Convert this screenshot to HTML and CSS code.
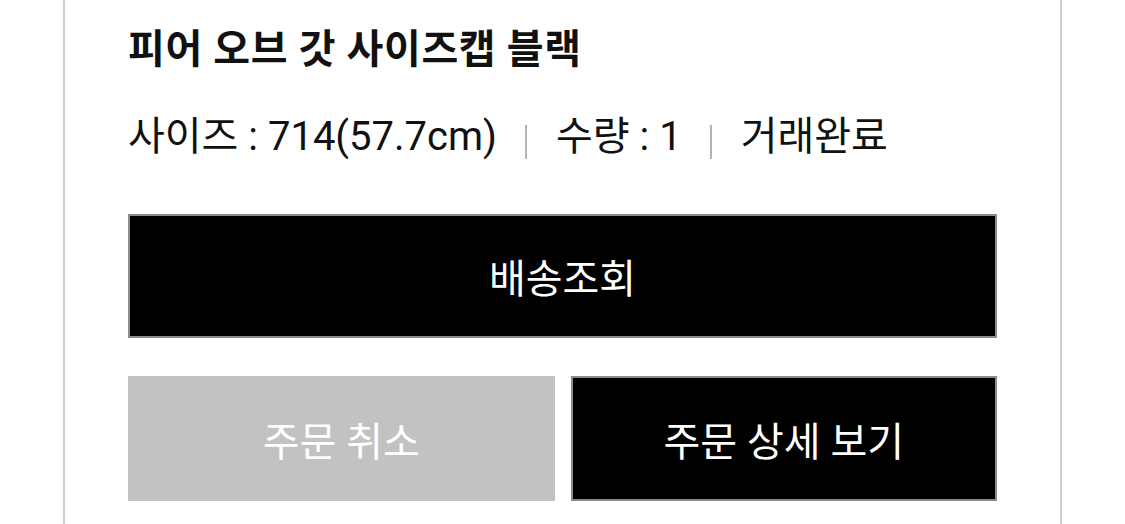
FILE: index.html
```html
<!DOCTYPE html>
<html lang="ko">
<head>
<meta charset="utf-8">
<link rel="stylesheet" href="styles.css">
</head>
<body>
<div class="card">
  <h1 class="title">피어 오브 갓 사이즈캡 블랙</h1>
  <div class="info">
    <span>사이즈 : 714(57.7cm)</span>
    <span class="sep"></span>
    <span>수량 : 1</span>
    <span class="sep"></span>
    <span>거래완료</span>
  </div>
  <button class="btn btn-dark btn-full">배송조회</button>
  <div class="row">
    <button class="btn btn-gray">주문 취소</button>
    <button class="btn btn-dark">주문 상세 보기</button>
  </div>
</div>
</body>
</html>
```
FILE: styles.css
```css
html, body {
  margin: 0;
  padding: 0;
  background: #ffffff;
}
body {
  font-family: "Roboto", "Noto Sans CJK KR", sans-serif;
  color: #111111;
  height: 524px;
  overflow: hidden;
}
.card {
  box-sizing: border-box;
  margin-left: 63px;
  width: 999px;
  height: 524px;
  padding: 26px 63px 0;
  border-left: 2px solid #cfcfcf;
  border-right: 2px solid #cfcfcf;
}
.title {
  margin: 0;
  font-size: 40px;
  font-weight: 700;
  line-height: 48px;
  letter-spacing: 0.6px;
  color: #111111;
}
.info {
  display: flex;
  align-items: center;
  margin-top: 39px;
  font-size: 40px;
  line-height: 48px;
  font-weight: 400;
  color: #111111;
}
.sep {
  display: inline-block;
  width: 2px;
  height: 34px;
  background: #b4b4b4;
  margin: 10px 29px 0 28px;
}
.btn {
  display: flex;
  align-items: center;
  justify-content: center;
  box-sizing: border-box;
  font-family: inherit;
  font-size: 40px;
  font-weight: 400;
  color: #ffffff;
  padding: 0;
  margin: 0;
  cursor: pointer;
}
.btn-dark {
  background: #000000;
  border: 2px solid #8c8c8c;
}
.btn-gray {
  background: #c2c2c2;
  border: none;
}
.btn-full {
  width: 100%;
  height: 124px;
  margin-top: 53px;
}
.row {
  display: grid;
  grid-template-columns: 1fr 1fr;
  gap: 16px;
  margin-top: 38px;
}
.row .btn {
  height: 125px;
}
```
